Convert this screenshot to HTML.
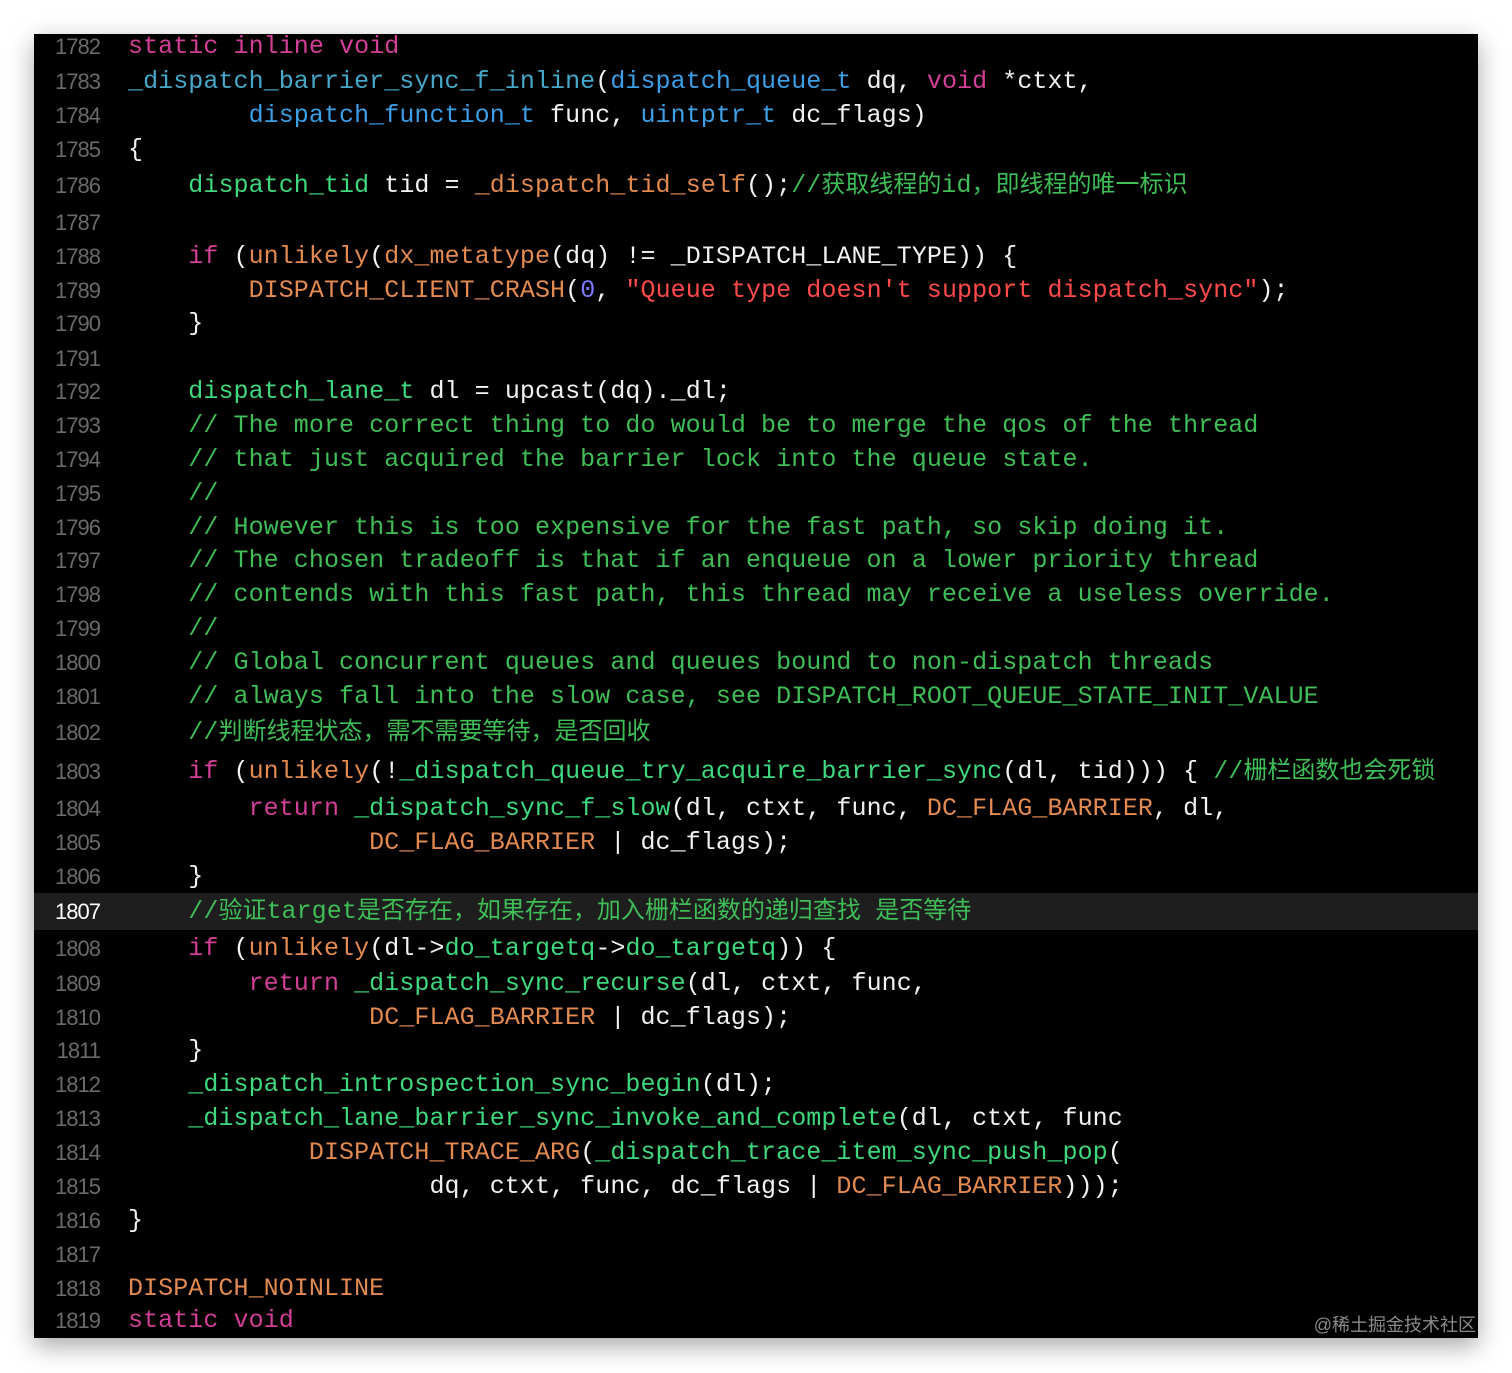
<!DOCTYPE html>
<html><head><meta charset="utf-8"><style>
html,body{margin:0;padding:0;background:#fff;width:1512px;height:1373px;overflow:hidden}
#p{position:absolute;left:34px;top:34px;width:1444px;height:1304px;background:#000;box-shadow:0 8px 24px rgba(0,0,0,.35);overflow:hidden}
.l{position:absolute;left:0;width:1444px;height:34px;line-height:34px;white-space:pre;font-family:"Liberation Mono","Noto Sans CJK SC",monospace;font-size:25px;letter-spacing:0.07px;color:#f2f2f2;margin-top:1px}
.n{position:absolute;left:0;width:66px;text-align:right;font-family:"Liberation Sans",sans-serif;font-size:22px;color:#6a6a6a;letter-spacing:-1px}
.c{position:absolute;left:94px}
.z{font-size:24px;letter-spacing:0}
.hl{background:#1e1e1e}
.hl .n{color:#fff}
.k{color:#d23f96}.t{color:#3d9fe6}.f{color:#46a8c8}.g{color:#3ed87e}.o{color:#e28a50}.m{color:#3fbe57}.s{color:#ff4a4a}.u{color:#7d78ff}
#w{position:absolute;right:36px;bottom:36px;font-family:"Liberation Sans","Noto Sans CJK SC",sans-serif;font-size:18px;color:#8a8a8a}
</style></head><body><div id="p">
<div class="l" style="top:-5px"><span class="n">1782</span><span class="c"><span class="k">static inline void</span></span></div>
<div class="l" style="top:30px"><span class="n">1783</span><span class="c"><span class="f">_dispatch_barrier_sync_f_inline</span>(<span class="t">dispatch_queue_t</span> dq, <span class="k">void</span> *ctxt,</span></div>
<div class="l" style="top:64px"><span class="n">1784</span><span class="c">        <span class="t">dispatch_function_t</span> func, <span class="t">uintptr_t</span> dc_flags)</span></div>
<div class="l" style="top:98px"><span class="n">1785</span><span class="c">{</span></div>
<div class="l" style="top:134px"><span class="n">1786</span><span class="c">    <span class="g">dispatch_tid</span> tid = <span class="o">_dispatch_tid_self</span>();<span class="m">//<span class="z">获取线程的</span>id<span class="z">，即线程的唯一标识</span></span></span></div>
<div class="l" style="top:171px"><span class="n">1787</span><span class="c"></span></div>
<div class="l" style="top:205px"><span class="n">1788</span><span class="c">    <span class="k">if</span> (<span class="o">unlikely</span>(<span class="o">dx_metatype</span>(dq) != _DISPATCH_LANE_TYPE)) {</span></div>
<div class="l" style="top:239px"><span class="n">1789</span><span class="c">        <span class="o">DISPATCH_CLIENT_CRASH</span>(<span class="u">0</span>, <span class="s">"Queue type doesn't support dispatch_sync"</span>);</span></div>
<div class="l" style="top:272px"><span class="n">1790</span><span class="c">    }</span></div>
<div class="l" style="top:307px"><span class="n">1791</span><span class="c"></span></div>
<div class="l" style="top:340px"><span class="n">1792</span><span class="c">    <span class="g">dispatch_lane_t</span> dl = upcast(dq)._dl;</span></div>
<div class="l" style="top:374px"><span class="n">1793</span><span class="c">    <span class="m">// The more correct thing to do would be to merge the qos of the thread</span></span></div>
<div class="l" style="top:408px"><span class="n">1794</span><span class="c">    <span class="m">// that just acquired the barrier lock into the queue state.</span></span></div>
<div class="l" style="top:442px"><span class="n">1795</span><span class="c">    <span class="m">//</span></span></div>
<div class="l" style="top:476px"><span class="n">1796</span><span class="c">    <span class="m">// However this is too expensive for the fast path, so skip doing it.</span></span></div>
<div class="l" style="top:509px"><span class="n">1797</span><span class="c">    <span class="m">// The chosen tradeoff is that if an enqueue on a lower priority thread</span></span></div>
<div class="l" style="top:543px"><span class="n">1798</span><span class="c">    <span class="m">// contends with this fast path, this thread may receive a useless override.</span></span></div>
<div class="l" style="top:577px"><span class="n">1799</span><span class="c">    <span class="m">//</span></span></div>
<div class="l" style="top:611px"><span class="n">1800</span><span class="c">    <span class="m">// Global concurrent queues and queues bound to non-dispatch threads</span></span></div>
<div class="l" style="top:645px"><span class="n">1801</span><span class="c">    <span class="m">// always fall into the slow case, see DISPATCH_ROOT_QUEUE_STATE_INIT_VALUE</span></span></div>
<div class="l" style="top:681px"><span class="n">1802</span><span class="c">    <span class="m">//<span class="z">判断线程状态，需不需要等待，是否回收</span></span></span></div>
<div class="l" style="top:720px"><span class="n">1803</span><span class="c">    <span class="k">if</span> (<span class="o">unlikely</span>(!<span class="g">_dispatch_queue_try_acquire_barrier_sync</span>(dl, tid))) { <span class="m">//<span class="z">栅栏函数也会死锁</span></span></span></div>
<div class="l" style="top:757px"><span class="n">1804</span><span class="c">        <span class="k">return</span> <span class="g">_dispatch_sync_f_slow</span>(dl, ctxt, func, <span class="o">DC_FLAG_BARRIER</span>, dl,</span></div>
<div class="l" style="top:791px"><span class="n">1805</span><span class="c">                <span class="o">DC_FLAG_BARRIER</span> | dc_flags);</span></div>
<div class="l" style="top:825px"><span class="n">1806</span><span class="c">    }</span></div>
<div class="l hl" style="top:858px;height:37px;line-height:37px"><span class="n">1807</span><span class="c">    <span class="m">//<span class="z">验证</span>target<span class="z">是否存在，如果存在，加入栅栏函数的递归查找 是否等待</span></span></span></div>
<div class="l" style="top:897px"><span class="n">1808</span><span class="c">    <span class="k">if</span> (<span class="o">unlikely</span>(dl-><span class="g">do_targetq</span>-><span class="g">do_targetq</span>)) {</span></div>
<div class="l" style="top:932px"><span class="n">1809</span><span class="c">        <span class="k">return</span> <span class="g">_dispatch_sync_recurse</span>(dl, ctxt, func,</span></div>
<div class="l" style="top:966px"><span class="n">1810</span><span class="c">                <span class="o">DC_FLAG_BARRIER</span> | dc_flags);</span></div>
<div class="l" style="top:999px"><span class="n">1811</span><span class="c">    }</span></div>
<div class="l" style="top:1033px"><span class="n">1812</span><span class="c">    <span class="g">_dispatch_introspection_sync_begin</span>(dl);</span></div>
<div class="l" style="top:1067px"><span class="n">1813</span><span class="c">    <span class="g">_dispatch_lane_barrier_sync_invoke_and_complete</span>(dl, ctxt, func</span></div>
<div class="l" style="top:1101px"><span class="n">1814</span><span class="c">            <span class="o">DISPATCH_TRACE_ARG</span>(<span class="g">_dispatch_trace_item_sync_push_pop</span>(</span></div>
<div class="l" style="top:1135px"><span class="n">1815</span><span class="c">                    dq, ctxt, func, dc_flags | <span class="o">DC_FLAG_BARRIER</span>)));</span></div>
<div class="l" style="top:1169px"><span class="n">1816</span><span class="c">}</span></div>
<div class="l" style="top:1203px"><span class="n">1817</span><span class="c"></span></div>
<div class="l" style="top:1237px"><span class="n">1818</span><span class="c"><span class="o">DISPATCH_NOINLINE</span></span></div>
<div class="l" style="top:1269px"><span class="n">1819</span><span class="c"><span class="k">static void</span></span></div>
</div>
<div id="w">@稀土掘金技术社区</div>
</body></html>
